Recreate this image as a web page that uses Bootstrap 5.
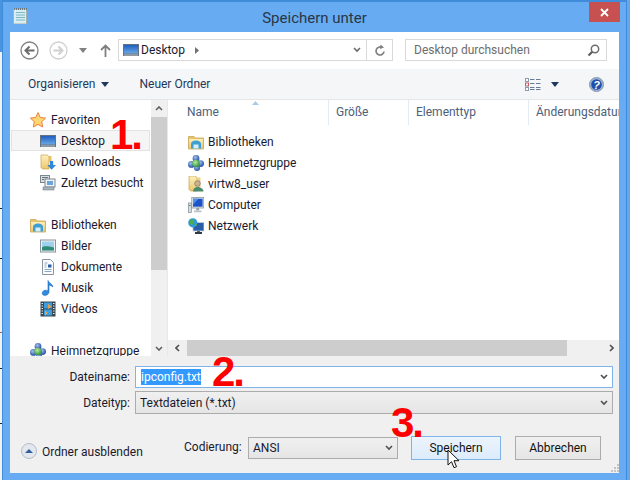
<!DOCTYPE html>
<html lang="de">
<head>
<meta charset="UTF-8">
<title>Speichern unter</title>
<link rel="stylesheet" href="https://cdn.jsdelivr.net/npm/bootstrap@5.3.0/dist/css/bootstrap.min.css">
<style>
html, body { width: 630px; height: 480px; overflow: hidden; }
body { background: linear-gradient(to right, #f2f2f2 2px, #6aa5e6 2px); font-family: Roboto, "Liberation Sans", sans-serif; font-size: 12px; line-height: 16px; color: #1a1a2e; }
svg { display: block; flex: none; }
.dlg { position: relative; width: 625px; height: 480px; margin-left: 2px; background: #67acf2; border: 1px solid #3f8cdb; border-top-width: 2px; border-bottom: 0; display: flex; flex-direction: column; padding: 0 7px 7px 7px; }
.desk-top { position: absolute; left: 0; top: 0; width: 2px; height: 52px; background: #4a93de; }
.desk-marks { position: absolute; left: 0; top: 0; }
.titlebar { height: 30px; position: relative; flex: none; }
.titlebar .ttl { font-size: 15px; color: #2a3645; text-align: center; line-height: 30px; padding-top: 1px; }
.xbtn { position: absolute; right: -1px; top: 0; width: 31px; height: 20px; background: #c75050; color: #fff; }
.client { flex: 1; background: #f0f0f0; display: flex; flex-direction: column; min-height: 0; }
.navrow { height: 37px; background: #fff; padding: 7px 12px 8px 10px; flex: none; }
.addr { width: 275px; height: 22px; border: 1px solid #d9d9d9; margin-left: 5px; }
.addr .rf { width: 26px; border-left: 1px solid #d9d9d9; }
.srch { width: 202px; height: 22px; border: 1px solid #d9d9d9; margin-left: 12px; color: #6d6d6d; padding: 0 6px 0 8px; }
.toolrow { height: 31px; background: #f5f6f7; border-bottom: 1px solid #e5e5e5; padding: 0 15px 0 18px; color: #1e395b; flex: none; }
.panes { height: 256px; background: #fff; flex: none; }
.tree { width: 141px; position: relative; overflow: hidden; padding-top: 9px; }
.tree-row { height: 21px; padding-left: 30px; gap: 5px; }
.tree-row.top { padding-left: 20px; }
.tree-row.sel { background: #f5f5f5; outline: 1px solid #e3e3e3; outline-offset: -1px; margin: 0 1px; padding-left: 29px; }
.gapper { height: 21px; }
.vbar { width: 16px; background: #f0f0f0; position: relative; }
.vthumb { position: absolute; left: 0; right: 0; top: 17px; height: 153px; background: #cdcdcd; }
.listarea { flex: 1; min-width: 0; position: relative; border-left: 1px solid #e8e8e8; display: flex; flex-direction: column; }
.cols { height: 25px; color: #4c607a; overflow: hidden; flex: none; white-space: nowrap; }
.cols > div { padding-left: 7px; height: 25px; line-height: 25px; border-right: 1px solid #e3ecf5; flex: none; }
.files { flex: 1; padding-top: 6px; padding-left: 20px; }
.file-row { height: 21px; gap: 4px; }
.hbar { height: 16px; background: #f0f0f0; flex: none; position: relative; }
.hthumb { position: absolute; left: 19px; width: 380px; top: 0; bottom: 0; background: #cdcdcd; }
.sortmark { position: absolute; left: 84px; top: 1px; }
.formarea { flex: 1; position: relative; padding: 10px 6px 0 0; }
.frow { gap: 5px; margin-bottom: 3px; }
.frow label { width: 120px; text-align: right; flex: none; }
.fld { flex: 1; height: 23px; border: 1px solid #acacac; padding-left: 4px; background: linear-gradient(#f0f0f0, #e5e5e5); }
.fld.act { height: 22px; padding-left: 5px; background: #fff; border-color: #7eb4ea; }
.hl { background: #3399ff; color: #fff; }
.footrow { position: absolute; left: 0; right: 0; top: 80px; height: 24px; }
.toggle { position: absolute; left: 11px; top: 6px; gap: 5px; }
.toggle span { padding-top: 2px; }
.codlabel { position: absolute; left: 174px; top: 3px; }
.codsel { position: absolute; left: 238px; top: 1px; width: 150px; height: 22px; border: 1px solid #acacac; background: linear-gradient(#f0f0f0, #e5e5e5); padding: 0 4px 0 4px; }
.wbtn { position: absolute; top: 0; height: 24px; border: 1px solid #acacac; background: linear-gradient(#f0f0f0, #e5e5e5); text-align: center; line-height: 22px; color: #111; }
.wbtn.hov { left: 401px; width: 90px; border-color: #7eb4ea; background: linear-gradient(#ecf4fc, #dcecfc); }
.wbtn.norm { left: 505px; width: 86px; }
.grip { position: absolute; right: 0; bottom: 0; }
.redmark { position: absolute; color: #fe0000; font-family: "Liberation Sans", sans-serif; font-weight: 700; line-height: 1; white-space: nowrap; font-size: 42px; letter-spacing: -2px; }
.cursor { position: absolute; left: 447px; top: 449px; }
.tr { color: #1a1a2e; white-space: nowrap; }
</style>
</head>
<body>
<div class="desk-top"></div>
<svg class="desk-marks" width="2" height="480" viewBox="0 0 2 480"><path d="M0 208.500h2M0 258.500h2M0 368.500h2M0 423.500h2" stroke="#20242c"/><path d="M0 332.500h2" stroke="#c0603a"/></svg>
<svg width="0" height="0" style="position:absolute">
  <defs>
    <linearGradient id="g-desk" x1="0" y1="0" x2="0" y2="1"><stop offset="0" stop-color="#1f5fbf"/><stop offset="1" stop-color="#6aa8e6"/></linearGradient>
    <linearGradient id="g-fold" x1="0" y1="0" x2="0" y2="1"><stop offset="0" stop-color="#fdf0bd"/><stop offset="1" stop-color="#ecc76e"/></linearGradient>
    <radialGradient id="g-blue" cx=".4" cy=".35" r=".7"><stop offset="0" stop-color="#9cc0f0"/><stop offset="1" stop-color="#1f469e"/></radialGradient>
    <radialGradient id="g-green" cx=".4" cy=".35" r=".7"><stop offset="0" stop-color="#b8ec9a"/><stop offset="1" stop-color="#23883a"/></radialGradient>
    <symbol id="i-desk" viewBox="0 0 16 16"><rect x="0" y="2" width="16" height="12" fill="#66727e"/><rect x="1" y="3" width="14" height="8.500" fill="url(#g-desk)"/><rect x="1" y="12.500" width="14" height="1" fill="#b8c0c8"/></symbol>
    <symbol id="i-star" viewBox="0 0 16 16"><path d="M8 .6l2.300 4.900 5.300.6-3.900 3.600 1 5.300L8 12.400 3.300 15l1-5.300L.4 6.100l5.300-.6z" fill="#fcd772" stroke="#ec7f3c"/></symbol>
    <symbol id="i-dl" viewBox="0 0 16 16"><path d="M1 1h6.500L9 3v12H2.500L1 13.500z" fill="url(#g-fold)" stroke="#c9a24e" stroke-width=".7"/><path d="M9 2h2.500v6H9z" fill="#e8c063"/><path d="M10 7h3.200v4H16l-4.400 4.800L7.200 11H10z" fill="#2f88d8"/></symbol>
    <symbol id="i-rec" viewBox="0 0 16 16"><rect x=".5" y=".5" width="9" height="7" fill="#d8dde2" stroke="#7d8790"/><path d="M2 2.500h6M2 4.500h2" stroke="#6a7680"/><rect x="5" y="4" width="10" height="8" fill="#eef2f5" stroke="#7d8790"/><rect x="7" y="6" width="6" height="4" fill="#6aa6d8"/><rect x="3" y="12" width="11" height="3" fill="#a8b0b8" stroke="#7d8790" stroke-width=".6"/></symbol>
    <symbol id="i-lib" viewBox="0 0 16 16"><path d="M.5 2.500h5.500l1.300 1.500h8.200V15H.5z" fill="#e8c46a" stroke="#c9a658" stroke-width=".8"/><rect x="1.200" y="5" width="13.600" height="9.400" fill="url(#g-fold)"/><path d="M3 14.400v-4.400c0-2 2-3.500 5-3.500s5 1.500 5 3.500v4.400z" fill="#3d9fd4"/><rect x="5.500" y="10.500" width="5" height="3.900" fill="#d8eef9"/></symbol>
    <symbol id="i-pic" viewBox="0 0 16 16"><rect x=".5" y="2" width="15" height="12" fill="#f2f4f6" stroke="#8b949c"/><rect x="2" y="3.500" width="12" height="9" fill="#9fd0ee"/><path d="M2 9.500c3-2 6-1 12 0v3H2z" fill="#2f8a78"/></symbol>
    <symbol id="i-doc" viewBox="0 0 16 16"><path d="M2.500.5h8l3 3v12h-11z" fill="#fbfcfd" stroke="#8b949c"/><path d="M4.500 4h3M4.500 6h2M4.500 8h2M4.500 10.500h7M4.500 12.500h7" stroke="#8ca6c4"/><rect x="8" y="5.500" width="3.500" height="3" fill="#2a5ea8"/></symbol>
    <symbol id="i-mus" viewBox="0 0 16 16"><path d="M8 .5c1 3 4.500 3 5 6.500-1-1.200-3-1.800-4-1.800V12c0 2.200-2.600 3.800-5.200 3.300-2.800-1-1.600-4.400 1.200-5 .8-.2 2.200 0 3 .4z" fill="#2f8ae0" stroke="#1f6cb8" stroke-width=".6"/></symbol>
    <symbol id="i-vid" viewBox="0 0 16 16"><rect x=".5" y=".5" width="15" height="15" fill="#39484f"/><rect x="4" y="1.500" width="8" height="6" fill="#3b9ee0"/><rect x="4" y="8.500" width="8" height="6" fill="#3b9ee0"/><path d="M1.500 2.500h1.500M1.500 5h1.500M1.500 7.500h1.500M1.500 10h1.500M1.500 12.500h1.500M13 2.500h1.500M13 5h1.500M13 7.500h1.500M13 10h1.500M13 12.500h1.500" stroke="#dfe8ec"/><path d="M8 3l3.500 2.500L8 8zM5 9.500l3 2.500-3 2.500z" fill="#e8a050"/></symbol>
    <symbol id="i-home" viewBox="0 0 16 16"><circle cx="3.400" cy="9.400" r="3.400" fill="url(#g-blue)"/><circle cx="12.600" cy="8.600" r="3.400" fill="url(#g-blue)"/><circle cx="8" cy="3.400" r="3.400" fill="url(#g-blue)"/><circle cx="9" cy="13" r="3" fill="url(#g-blue)"/><circle cx="8" cy="8.500" r="3.800" fill="url(#g-green)"/></symbol>
    <symbol id="i-user" viewBox="0 0 16 16"><path d="M1 0h6.500L9 2v13H2.500L1 13.500z" fill="url(#g-fold)" stroke="#c9a24e" stroke-width=".7"/><path d="M9 1.500h3.500V14H9z" fill="#eed28c"/><circle cx="9.500" cy="7.500" r="2.800" fill="#d0b090" stroke="#5b6b60" stroke-width=".6"/><path d="M5 15.500c0-3 2-4.500 4.500-4.500s6 1.500 6 4.500z" fill="#4a8a70"/></symbol>
    <symbol id="i-comp" viewBox="0 0 16 16"><rect x=".3" y="6" width="3" height="9.500" fill="#d8dde2" stroke="#7d8790" stroke-width=".7"/><rect x="1.100" y="8" width="1.400" height="1" fill="#4a8a3a"/><rect x="3.800" y=".5" width="12" height="10.500" fill="#e5e9ec" stroke="#7d8790" stroke-width=".7"/><rect x="5" y="1.700" width="9.600" height="8" fill="#1e52c8"/><path d="M5 1.700h5.500L5 7.700z" fill="#4a94ec"/><rect x="8.200" y="11" width="3" height="2.500" fill="#9aa2aa"/><rect x="6" y="13.500" width="7.500" height="1.800" fill="#bcc3c9"/></symbol>
    <symbol id="i-net" viewBox="0 0 16 16"><rect x="5" y="4.500" width="11" height="8.500" fill="#2a5ea8" stroke="#c8d0d8" stroke-width=".8"/><rect x="9" y="13" width="3" height="1.500" fill="#5a6570"/><rect x="7" y="14" width="7" height="2" fill="#2e3a46"/><circle cx="4.800" cy="4.800" r="4.600" fill="#2f9ad8"/><path d="M1.800 2.500c1.500-1.500 3.500-1.500 4.200 0s-1 2.500-1.500 4-2.700 0-2.700-1.500zM7 5.500l2 .5-.5 2-1.500 0z" fill="#4cae4c"/></symbol>
  </defs>
</svg>

<div class="dlg">
  <div class="titlebar">
    <svg width="15" height="16" viewBox="0 0 15 16" class="position-absolute" style="left:3px;top:6px"><rect x=".5" y="1" width="13" height="15" fill="#d8eef0" stroke="#a8b0a8"/><path d="M3 4.500h9M3 7h9M3 9.500h9M3 12h9" stroke="#7ab8c8"/><path d="M1 1h13" stroke="#6a7a80" stroke-width="2" stroke-dasharray="1 1"/></svg>
    <div class="ttl">Speichern unter</div>
    <div class="xbtn d-flex align-items-center justify-content-center">
      <svg width="9" height="9" viewBox="0 0 9 9"><path d="M1 1l7 7M8 1l-7 7" stroke="#fff" stroke-width="1.800"/></svg>
    </div>
  </div>
  <div class="client">
    <div class="navrow d-flex align-items-center">
      <svg width="19" height="19" viewBox="0 0 19 19" class="me-2"><circle cx="9.500" cy="9.500" r="8.500" fill="#fff" stroke="#7f7f7f" stroke-width="1.300"/><path d="M14.500 9.500H6M9.500 5.500l-4 4 4 4" fill="none" stroke="#6b6b6b" stroke-width="2"/></svg>
      <svg width="19" height="19" viewBox="0 0 19 19" style="margin-left:2px"><circle cx="9.500" cy="9.500" r="8.500" fill="#fff" stroke="#d0d0d0" stroke-width="1.300"/><path d="M4.500 9.500H13M9.500 5.500l4 4-4 4" fill="none" stroke="#d0d0d0" stroke-width="2"/></svg>
      <svg width="8" height="5" viewBox="0 0 8 5" style="margin-left:11px"><path d="M0 0h8L4 5z" fill="#808080"/></svg>
      <svg width="11" height="13" viewBox="0 0 11 13" style="margin-left:13px"><path d="M5.500 13V1.500M1 6l4.500-4.500L10 6" fill="none" stroke="#7f7f7f" stroke-width="1.800"/></svg>
      <div class="addr d-flex align-items-center" style="margin-left:7px">
        <svg width="16" height="16" class="ms-1"><use href="#i-desk"/></svg>
        <span class="tr" style="margin-left:2px">Desktop</span>
        <svg width="4" height="7" viewBox="0 0 4 7" style="margin-left:10px"><path d="M0 0l4 3.500L0 7z" fill="#707070"/></svg>
        <svg width="8" height="6" viewBox="0 0 8 6" class="ms-auto" style="margin-right:5px"><path d="M1 1l3 3 3-3" fill="none" stroke="#6a6a6a" stroke-width="1.600"/></svg>
        <div class="rf h-100 d-flex align-items-center justify-content-center">
          <svg width="12" height="13" viewBox="0 0 12 13"><path d="M10 7.500a4 4 0 1 1-2-4" fill="none" stroke="#808080" stroke-width="1.700"/><path d="M6.500 .5l3.500 3-4 1.500z" fill="#808080"/></svg>
        </div>
      </div>
      <div class="srch d-flex align-items-center justify-content-between">
        <span>Desktop durchsuchen</span>
        <svg width="13" height="13" viewBox="0 0 13 13"><circle cx="8" cy="5" r="3.700" fill="none" stroke="#6e6e6e" stroke-width="1.500"/><path d="M5.300 7.700L1.500 11.500" stroke="#5e5e5e" stroke-width="2.200"/></svg>
      </div>
    </div>
    <div class="toolrow d-flex align-items-center">
      <span>Organisieren</span>
      <svg width="8" height="5" viewBox="0 0 8 5" style="margin-left:6px"><path d="M0 0h8L4 5z" fill="#1e395b"/></svg>
      <span style="margin-left:30px">Neuer Ordner</span>
      <svg width="16" height="13" viewBox="0 0 16 13" class="ms-auto"><rect x=".5" y=".5" width="3" height="3" fill="#fff" stroke="#8a9bb0"/><rect x=".5" y="5" width="3" height="3" fill="#fff" stroke="#c06060"/><rect x=".5" y="9.500" width="3" height="3" fill="#fff" stroke="#8a9bb0"/><path d="M5 1.500h4.500M11 1.500h4.500M5 5.500h4.500M11 5.500h4.500M5 9.500h4.500M11 9.500h4.500M5 11.500h4.500M11 11.500h4.500" stroke="#6a7c94"/></svg>
      <svg width="8" height="5" viewBox="0 0 8 5" style="margin-left:10px"><path d="M0 0h8L4 5z" fill="#1e395b"/></svg>
      <svg width="15" height="15" viewBox="0 0 15 15" style="margin-left:30px"><circle cx="7.500" cy="7.500" r="7" fill="#9ab4d8" stroke="#8a98a8"/><circle cx="7.500" cy="7.500" r="5.300" fill="#1f4fa8"/><text x="7.500" y="11.500" font-size="11" font-weight="700" font-style="italic" text-anchor="middle" fill="#fff" font-family="Liberation Sans">?</text></svg>
    </div>
    <div class="panes d-flex">
      <div class="tree">
        <div class="tree-row top d-flex align-items-center"><svg width="16" height="16"><use href="#i-star"/></svg><span class="tr">Favoriten</span></div>
        <div class="tree-row sel d-flex align-items-center"><svg width="16" height="16"><use href="#i-desk"/></svg><span class="tr">Desktop</span></div>
        <div class="tree-row d-flex align-items-center"><svg width="16" height="16"><use href="#i-dl"/></svg><span class="tr">Downloads</span></div>
        <div class="tree-row d-flex align-items-center"><svg width="16" height="16"><use href="#i-rec"/></svg><span class="tr">Zuletzt besucht</span></div>
        <div class="gapper"></div>
        <div class="tree-row top d-flex align-items-center"><svg width="16" height="16"><use href="#i-lib"/></svg><span class="tr">Bibliotheken</span></div>
        <div class="tree-row d-flex align-items-center"><svg width="16" height="16"><use href="#i-pic"/></svg><span class="tr">Bilder</span></div>
        <div class="tree-row d-flex align-items-center"><svg width="16" height="16"><use href="#i-doc"/></svg><span class="tr">Dokumente</span></div>
        <div class="tree-row d-flex align-items-center"><svg width="16" height="16"><use href="#i-mus"/></svg><span class="tr">Musik</span></div>
        <div class="tree-row d-flex align-items-center"><svg width="16" height="16"><use href="#i-vid"/></svg><span class="tr">Videos</span></div>
        <div class="gapper"></div>
        <div class="tree-row top d-flex align-items-center"><svg width="16" height="16"><use href="#i-home"/></svg><span class="tr">Heimnetzgruppe</span></div>
      </div>
      <div class="vbar">
        <svg width="8" height="5" viewBox="0 0 8 5" class="position-absolute" style="left:4px;top:6px"><path d="M1 4l3-3 3 3" fill="none" stroke="#606060" stroke-width="1.600"/></svg>
        <div class="vthumb"></div>
        <svg width="8" height="5" viewBox="0 0 8 5" class="position-absolute" style="left:4px;bottom:5px"><path d="M1 1l3 3 3-3" fill="none" stroke="#606060" stroke-width="1.600"/></svg>
      </div>
      <div class="listarea">
        <svg class="sortmark" width="7" height="4" viewBox="0 0 7 4"><path d="M0 4l3.500-4L7 4z" fill="#a9c9e6"/></svg>
        <div class="cols d-flex">
          <div style="width:161px;padding-left:19px">Name</div>
          <div style="width:80px">Größe</div>
          <div style="width:120px">Elementtyp</div>
          <div style="width:90px;border:0">Änderungsdatum</div>
        </div>
        <div class="files">
          <div class="file-row d-flex align-items-center"><svg width="16" height="16"><use href="#i-lib"/></svg><span class="tr">Bibliotheken</span></div>
          <div class="file-row d-flex align-items-center"><svg width="16" height="16"><use href="#i-home"/></svg><span class="tr">Heimnetzgruppe</span></div>
          <div class="file-row d-flex align-items-center"><svg width="16" height="16"><use href="#i-user"/></svg><span class="tr">virtw8_user</span></div>
          <div class="file-row d-flex align-items-center"><svg width="16" height="16"><use href="#i-comp"/></svg><span class="tr">Computer</span></div>
          <div class="file-row d-flex align-items-center"><svg width="16" height="16"><use href="#i-net"/></svg><span class="tr">Netzwerk</span></div>
        </div>
        <div class="hbar">
          <svg width="5" height="8" viewBox="0 0 5 8" class="position-absolute" style="left:7px;top:4px"><path d="M4 1L1 4l3 3" fill="none" stroke="#505050" stroke-width="1.600"/></svg>
          <div class="hthumb"></div>
          <svg width="5" height="8" viewBox="0 0 5 8" class="position-absolute" style="right:5px;top:4px"><path d="M1 1l3 3-3 3" fill="none" stroke="#505050" stroke-width="1.600"/></svg>
        </div>
      </div>
    </div>
    <div class="formarea">
      <div class="frow d-flex align-items-center"><label>Dateiname:</label>
        <div class="fld act d-flex align-items-center"><span class="hl">ipconfig.txt</span><svg width="8" height="6" viewBox="0 0 8 6" class="ms-auto me-1"><path d="M1 1l3 3 3-3" fill="none" stroke="#505050" stroke-width="1.600"/></svg></div>
      </div>
      <div class="frow d-flex align-items-center"><label>Dateityp:</label>
        <div class="fld d-flex align-items-center"><span>Textdateien (*.txt)</span><svg width="8" height="6" viewBox="0 0 8 6" class="ms-auto me-1"><path d="M1 1l3 3 3-3" fill="none" stroke="#505050" stroke-width="1.600"/></svg></div>
      </div>
      <div class="footrow">
        <div class="toggle d-flex align-items-center">
          <svg width="16" height="16" viewBox="0 0 16 16"><circle cx="8" cy="8" r="7.500" fill="#e4e8ee" stroke="#b4bcc8"/><path d="M4 10l4-4 4 4z" fill="#2f5f9e"/></svg>
          <span>Ordner ausblenden</span>
        </div>
        <span class="codlabel">Codierung:</span>
        <div class="codsel d-flex align-items-center"><span>ANSI</span><svg width="8" height="6" viewBox="0 0 8 6" class="ms-auto"><path d="M1 1l3 3 3-3" fill="none" stroke="#505050" stroke-width="1.600"/></svg></div>
        <div class="wbtn hov">Speichern</div>
        <div class="wbtn norm">Abbrechen</div>
      </div>
      <svg class="grip" width="9" height="9" viewBox="0 0 9 9"><path d="M7 0h2v2H7zM4 3h2v2H4zM7 3h2v2H7zM1 6h2v2H1zM4 6h2v2H4zM7 6h2v2H7z" fill="#c4c4c4"/></svg>
    </div>
  </div>
  <div class="redmark" style="left:107px;top:112px">1.</div>
  <div class="redmark" style="left:209px;top:349px">2.</div>
  <div class="redmark" style="left:388px;top:400px">3.</div>
</div>
<svg class="cursor" width="14" height="21" viewBox="0 0 14 21"><path d="M1 1v15l3.500-3.300 2.500 6 2.500-1-2.500-6H12z" fill="#fff" stroke="#111" stroke-width="1"/></svg>
</body>
</html>
